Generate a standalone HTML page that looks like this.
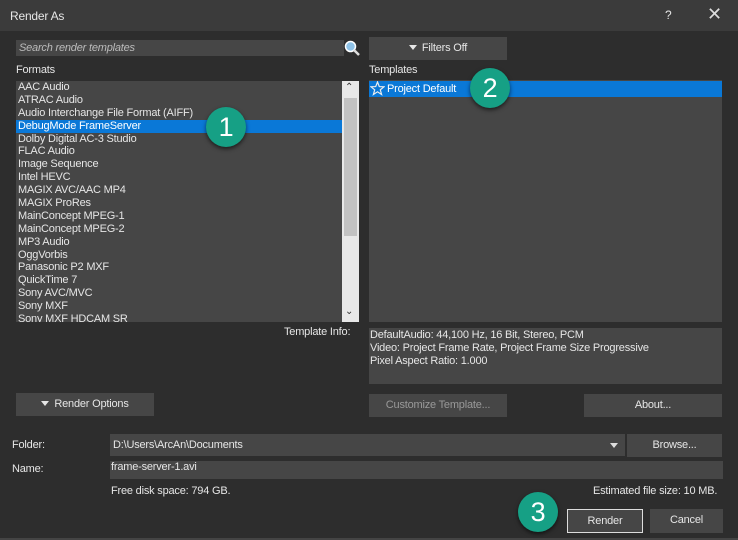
<!DOCTYPE html>
<html><head><style>
*{margin:0;padding:0;box-sizing:border-box}
body{width:738px;height:540px;background:#2d2d2d;font-family:"Liberation Sans",sans-serif;font-size:11px;color:#e6e6e6;position:relative;overflow:hidden;letter-spacing:-0.2px}
.a{position:absolute}
.title{left:0;top:0;width:738px;height:31px;background:#3b3b3b}
.box{background:#464646}
.btn{background:#464646;text-align:center;line-height:23px;color:#e6e6e6}
.items div{height:12.9px;line-height:13px;padding-left:2px;white-space:nowrap}
.circ{width:40px;height:40px;border-radius:50%;background:#16a085;color:#fff;font-size:27px;text-align:center;line-height:40px;box-shadow:0 2px 4px rgba(0,0,0,.6)}
.tri{display:inline-block;width:0;height:0;border-left:4px solid transparent;border-right:4px solid transparent;border-top:5px solid #e6e6e6;margin-right:5px;vertical-align:1px}
</style></head><body>
<div class="a title"></div>
<div class="a" style="left:10px;top:9px;font-size:12px">Render As</div>
<div class="a" style="left:665px;top:8px;font-size:12px">?</div>
<div class="a" style="left:707px;top:4px;font-size:18px;color:#ddd">✕</div>
<div class="a box" style="left:16px;top:40px;width:328px;height:16px;font-style:italic;color:#bbb;padding:2px 3px">Search render templates</div>
<svg class="a" style="left:344px;top:40px" width="16" height="16"><circle cx="6.5" cy="6.5" r="5" fill="#8fc3e8" stroke="#fff" stroke-width="1.5"/><line x1="10" y1="10" x2="15" y2="15" stroke="#ddd" stroke-width="2.5"/></svg>
<div class="a btn" style="left:369px;top:37px;width:138px;height:23px"><span class="tri"></span>Filters Off</div>
<div class="a" style="left:16px;top:64px">Formats</div>
<div class="a" style="left:369px;top:64px">Templates</div>
<div class="a box items" style="left:16px;top:81px;width:343px;height:241px;overflow:hidden">
<div>AAC Audio</div><div>ATRAC Audio</div><div>Audio Interchange File Format (AIFF)</div><div style="background:#0a78d7;width:326px;color:#fff">DebugMode FrameServer</div><div>Dolby Digital AC-3 Studio</div><div>FLAC Audio</div><div>Image Sequence</div><div>Intel HEVC</div><div>MAGIX AVC/AAC MP4</div><div>MAGIX ProRes</div><div>MainConcept MPEG-1</div><div>MainConcept MPEG-2</div><div>MP3 Audio</div><div>OggVorbis</div><div>Panasonic P2 MXF</div><div>QuickTime 7</div><div>Sony AVC/MVC</div><div>Sony MXF</div><div>Sony MXF HDCAM SR</div>
</div>
<div class="a" style="left:342px;top:81px;width:17px;height:241px;background:#e8e8e8"></div>
<div class="a" style="left:344px;top:98px;width:13px;height:138px;background:#c2c2c2"></div>
<div class="a" style="left:345px;top:82px;color:#333;font-size:10px">⌃</div>
<div class="a" style="left:345px;top:306px;color:#333;font-size:10px">⌄</div>
<div class="a box" style="left:369px;top:80px;width:353px;height:242px"></div>
<div class="a" style="left:369px;top:81px;width:353px;height:16px;background:#0a78d7;color:#fff;line-height:16px;padding-left:18px">Project Default</div>
<svg class="a" style="left:370px;top:81px" width="15" height="15"><polygon points="7.5,1 9.3,5.6 14,5.8 10.3,8.8 11.6,13.5 7.5,10.8 3.4,13.5 4.7,8.8 1,5.8 5.7,5.6" fill="none" stroke="#eee" stroke-width="1.2"/></svg>
<div class="a" style="left:284px;top:326px">Template Info:</div>
<div class="a box" style="left:369px;top:328px;width:353px;height:56px;padding:1px 1px;line-height:13px">DefaultAudio: 44,100 Hz, 16 Bit, Stereo, PCM<br>Video: Project Frame Rate, Project Frame Size Progressive<br>Pixel Aspect Ratio: 1.000</div>
<div class="a btn" style="left:16px;top:393px;width:138px;height:23px"><span class="tri"></span>Render Options</div>
<div class="a btn" style="left:369px;top:394px;width:138px;height:23px;color:#999">Customize Template...</div>
<div class="a btn" style="left:584px;top:394px;width:138px;height:23px">About...</div>
<div class="a" style="left:12px;top:439px">Folder:</div>
<div class="a box" style="left:110px;top:434px;width:515px;height:22px;line-height:22px;padding-left:3px">D:\Users\ArcAn\Documents</div>
<div class="a" style="left:610px;top:443px;border-left:4px solid transparent;border-right:4px solid transparent;border-top:5px solid #ddd"></div>
<div class="a btn" style="left:627px;top:434px;width:95px;height:23px">Browse...</div>
<div class="a" style="left:12px;top:463px">Name:</div>
<div class="a box" style="left:110px;top:461px;width:613px;height:18px;padding-left:1px;line-height:12px">frame-server-1.avi</div>
<div class="a" style="left:111px;top:485px">Free disk space: 794 GB.</div>
<div class="a" style="left:593px;top:485px">Estimated file size: 10 MB.</div>
<div class="a btn" style="left:567px;top:509px;width:76px;height:24px;border:1px solid #ddd;line-height:22px">Render</div>
<div class="a btn" style="left:650px;top:509px;width:73px;height:24px">Cancel</div>
<div class="a" style="left:0;top:538px;width:738px;height:2px;background:#444"></div>
<div class="a circ" style="left:206px;top:107px">1</div>
<div class="a circ" style="left:470px;top:68px">2</div>
<div class="a circ" style="left:518px;top:492px">3</div>
</body></html>
